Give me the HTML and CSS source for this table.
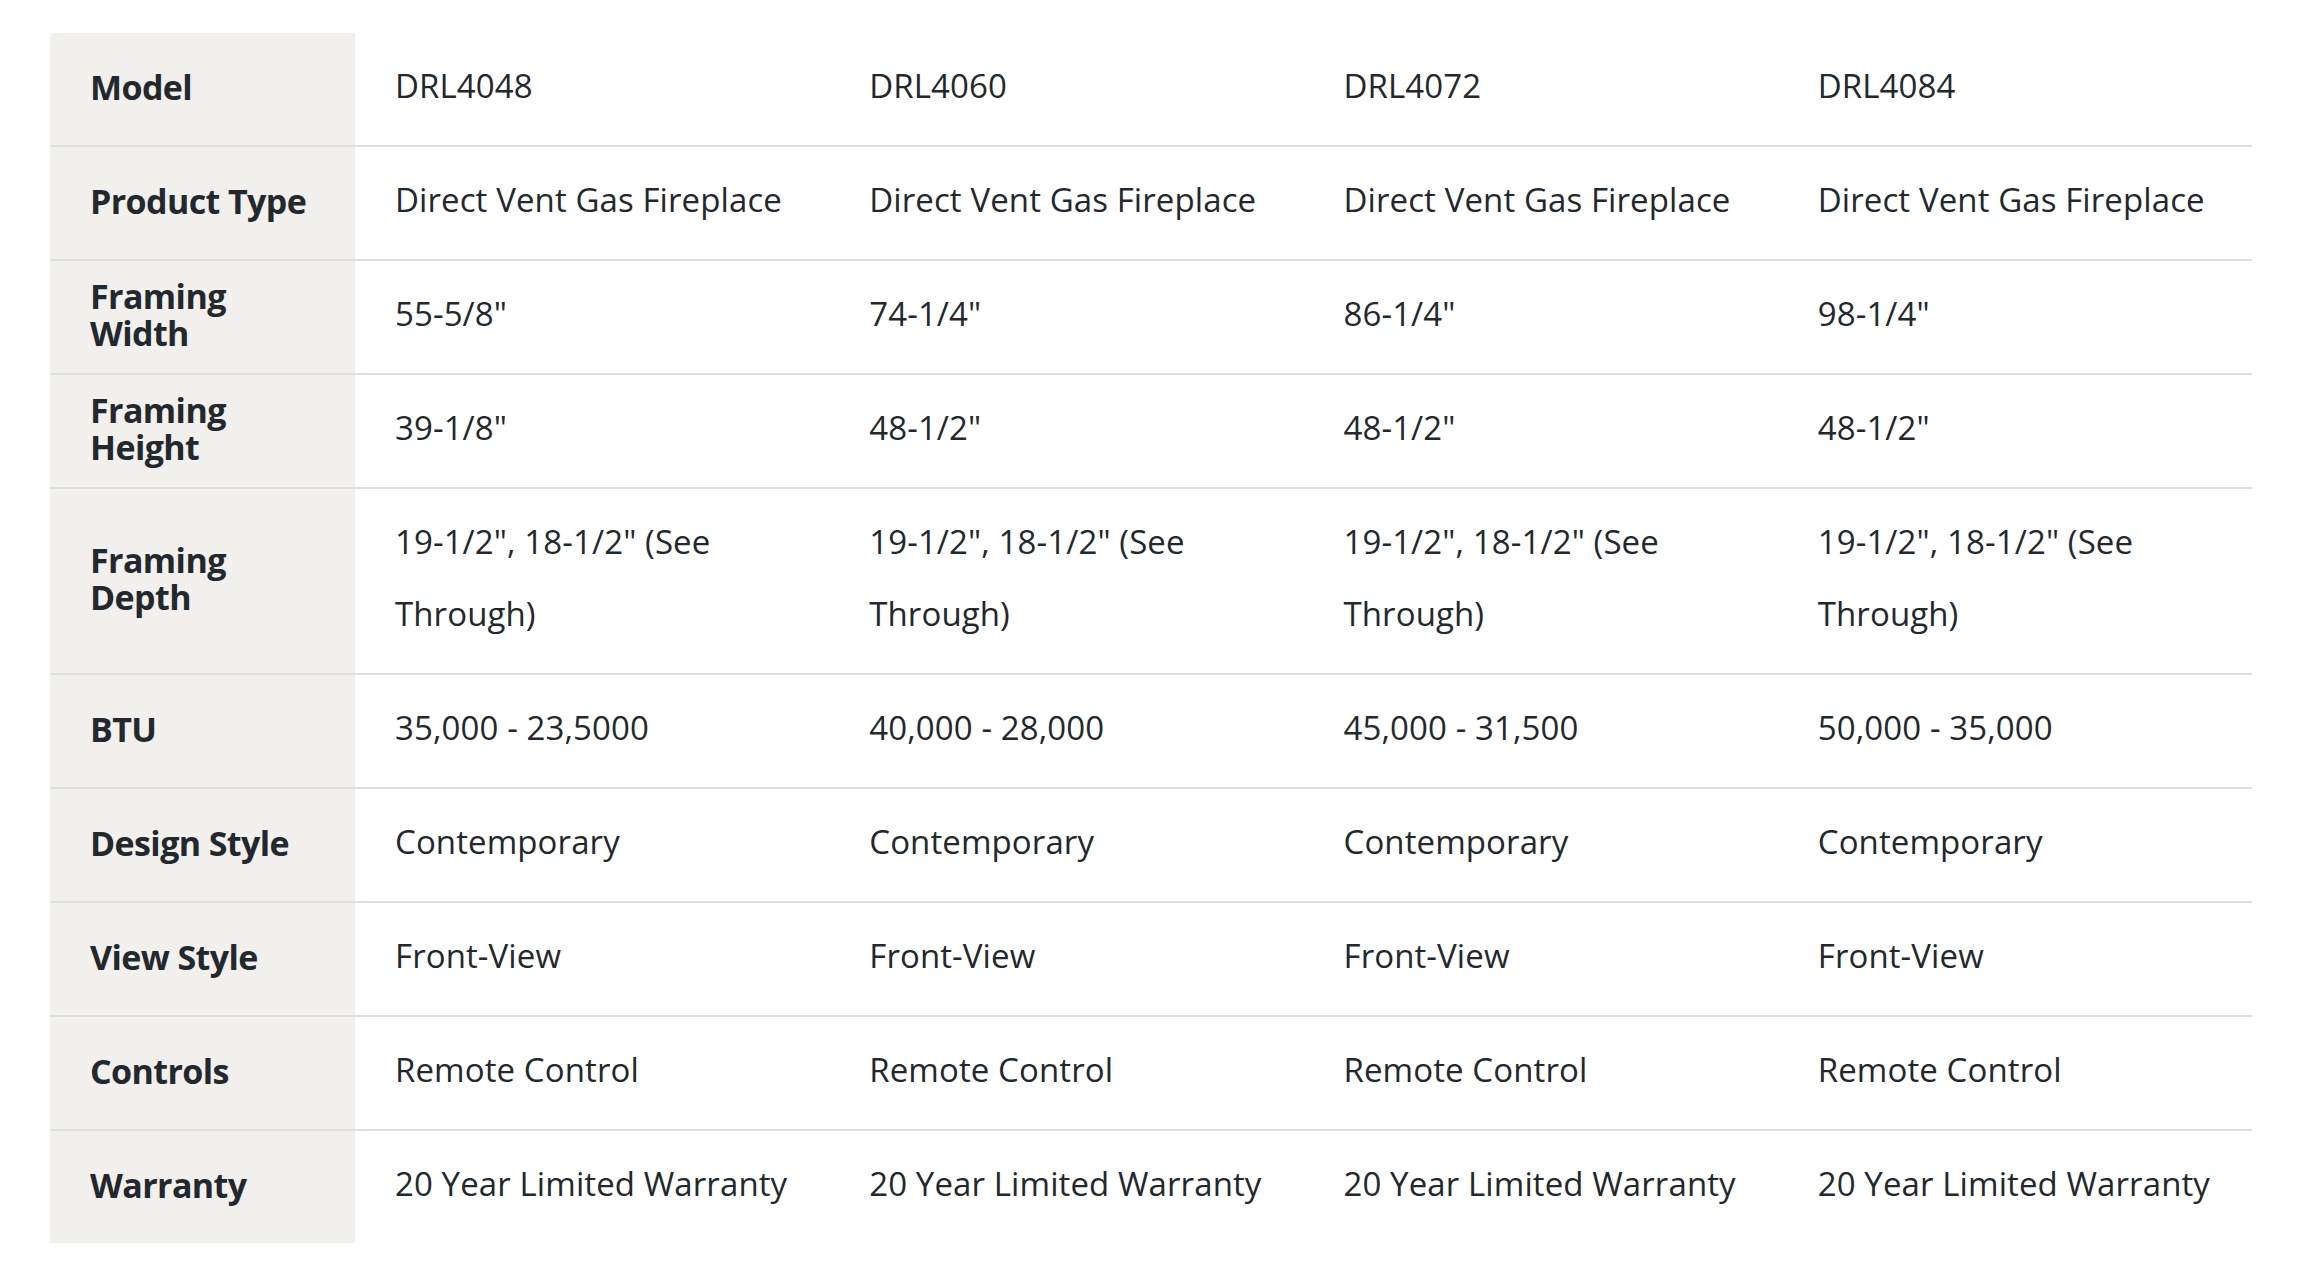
FILE: index.html
```html
<!DOCTYPE html>
<html lang="en">
<head>
<meta charset="utf-8">
<title>Specifications</title>
<link rel="stylesheet" href="styles.css">
</head>
<body>
<div class="page">
<table class="specs">
  <colgroup>
    <col class="col-label">
    <col class="col-data">
    <col class="col-data">
    <col class="col-data">
    <col class="col-data">
  </colgroup>
  <tbody>
    <tr><th>Model</th><td>DRL4048</td><td>DRL4060</td><td>DRL4072</td><td>DRL4084</td></tr>
    <tr><th>Product Type</th><td>Direct Vent Gas Fireplace</td><td>Direct Vent Gas Fireplace</td><td>Direct Vent Gas Fireplace</td><td>Direct Vent Gas Fireplace</td></tr>
    <tr><th>Framing Width</th><td>55-5/8"</td><td>74-1/4"</td><td>86-1/4"</td><td>98-1/4"</td></tr>
    <tr><th>Framing Height</th><td>39-1/8"</td><td>48-1/2"</td><td>48-1/2"</td><td>48-1/2"</td></tr>
    <tr><th>Framing Depth</th><td>19-1/2", 18-1/2" (See Through)</td><td>19-1/2", 18-1/2" (See Through)</td><td>19-1/2", 18-1/2" (See Through)</td><td>19-1/2", 18-1/2" (See Through)</td></tr>
    <tr><th>BTU</th><td>35,000 - 23,5000</td><td>40,000 - 28,000</td><td>45,000 - 31,500</td><td>50,000 - 35,000</td></tr>
    <tr><th>Design Style</th><td>Contemporary</td><td>Contemporary</td><td>Contemporary</td><td>Contemporary</td></tr>
    <tr><th>View Style</th><td>Front-View</td><td>Front-View</td><td>Front-View</td><td>Front-View</td></tr>
    <tr><th>Controls</th><td>Remote Control</td><td>Remote Control</td><td>Remote Control</td><td>Remote Control</td></tr>
    <tr><th>Warranty</th><td>20 Year Limited Warranty</td><td>20 Year Limited Warranty</td><td>20 Year Limited Warranty</td><td>20 Year Limited Warranty</td></tr>
  </tbody>
</table>
</div>
</body>
</html>
```
FILE: styles.css
```css
html, body {
  margin: 0;
  padding: 0;
  background: #ffffff;
}

.page {
  padding: 33px 64px 0 50px;
}

.specs {
  width: 2202px;
  border-collapse: collapse;
  table-layout: fixed;
  font-family: "Open Sans", "Noto Sans", sans-serif;
  color: #23282d;
}

.col-label {
  width: 305px;
}

.specs th,
.specs td {
  vertical-align: middle;
  text-align: left;
  border-bottom: 2px solid #dcdee2;
}

.specs tr:last-child th,
.specs tr:last-child td {
  border-bottom: none;
}

.specs th {
  padding: 17px 40px 21px;
  background: #f1f0ed;
  font-weight: 700;
  font-size: 34px;
  line-height: 37px;
  letter-spacing: -0.6px;
}

.specs td {
  padding: 17px 40px 23px;
  height: 72px;
  font-weight: 400;
  font-size: 33px;
  line-height: 72px;
  letter-spacing: 0.1px;
}
```
